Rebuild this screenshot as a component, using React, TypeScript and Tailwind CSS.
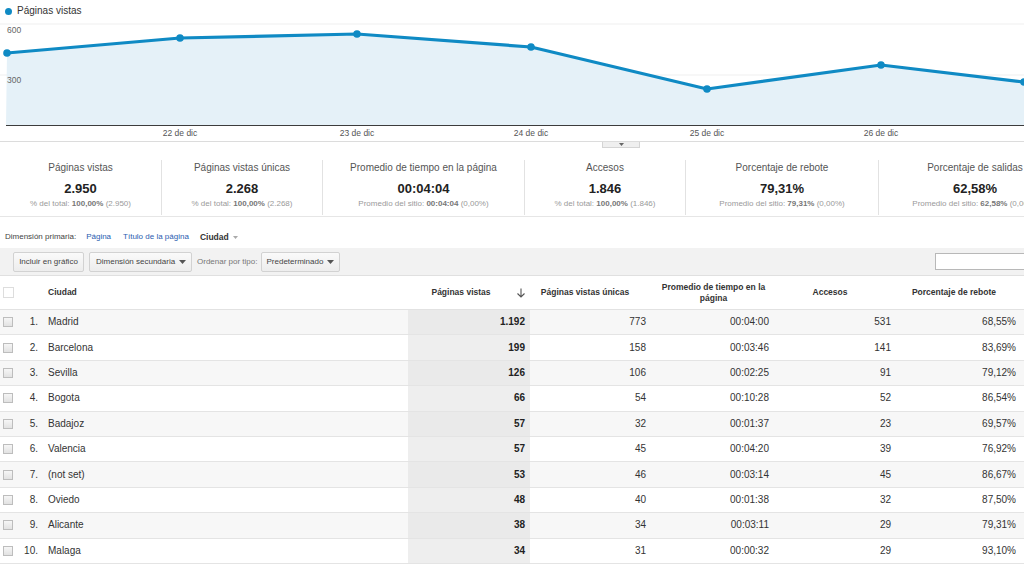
import React from "react";

const rows = [
  ["Madrid", "1.192", "773", "00:04:00", "531", "68,55%"],
  ["Barcelona", "199", "158", "00:03:46", "141", "83,69%"],
  ["Sevilla", "126", "106", "00:02:25", "91", "79,12%"],
  ["Bogota", "66", "54", "00:10:28", "52", "86,54%"],
  ["Badajoz", "57", "32", "00:01:37", "23", "69,57%"],
  ["Valencia", "57", "45", "00:04:20", "39", "76,92%"],
  ["(not set)", "53", "46", "00:03:14", "45", "86,67%"],
  ["Oviedo", "48", "40", "00:01:38", "32", "87,50%"],
  ["Alicante", "38", "34", "00:03:11", "29", "79,31%"],
  ["Malaga", "34", "31", "00:00:32", "29", "93,10%"],
];

const metrics = [
  { w: "w-[161px]", title: "Páginas vistas", value: "2.950", pre: "% del total: ", bold: "100,00%", post: " (2.950)" },
  { w: "w-[161px]", title: "Páginas vistas únicas", value: "2.268", pre: "% del total: ", bold: "100,00%", post: " (2.268)" },
  { w: "w-[202px]", title: "Promedio de tiempo en la página", value: "00:04:04", pre: "Promedio del sitio: ", bold: "00:04:04", post: " (0,00%)" },
  { w: "w-[161px]", title: "Accesos", value: "1.846", pre: "% del total: ", bold: "100,00%", post: " (1.846)" },
  { w: "w-[193px]", title: "Porcentaje de rebote", value: "79,31%", pre: "Promedio del sitio: ", bold: "79,31%", post: " (0,00%)" },
  { w: "w-[193px]", title: "Porcentaje de salidas", value: "62,58%", pre: "Promedio del sitio: ", bold: "62,58%", post: " (0,00%)" },
];

const points: [number, number][] = [
  [7, 31],
  [180, 16],
  [357, 12],
  [531, 25],
  [707, 67],
  [881, 43],
  [1024, 60],
];

const xLabels: [number, string][] = [
  [180, "22 de dic"],
  [357, "23 de dic"],
  [531, "24 de dic"],
  [707, "25 de dic"],
  [881, "26 de dic"],
];

function Caret() {
  return (
    <svg width="7" height="4" viewBox="0 0 7 4" className="block shrink-0">
      <path d="M0 0 L7 0 L3.5 4 Z" fill="#555" />
    </svg>
  );
}

function Chart() {
  const line = points.map((p) => p.join(",")).join(" ");
  const area = `6,103 ${line} 1024,103`;
  return (
    <svg width="1024" height="119" className="block">
      <line x1="0" y1="2" x2="1024" y2="2" stroke="#efefef" strokeWidth="1" />
      <line x1="0" y1="53" x2="1024" y2="53" stroke="#efefef" strokeWidth="1" />
      <polygon points={area} fill="#e5f1f8" />
      <polyline points={line} fill="none" stroke="#0f8ac4" strokeWidth="3.2" strokeLinejoin="round" />
      {points.map(([x, y]) => (
        <circle key={x} cx={x} cy={y} r="3.8" fill="#0f8ac4" />
      ))}
      <line x1="6" y1="103.5" x2="1024" y2="103.5" stroke="#3c3c3c" strokeWidth="1.2" />
      <text x="7" y="11" fontSize="8.5" fill="#666" fontFamily="Liberation Sans, Arial, sans-serif">600</text>
      <text x="7" y="61" fontSize="8.5" fill="#666" fontFamily="Liberation Sans, Arial, sans-serif">300</text>
      {xLabels.map(([x, t]) => (
        <text key={t} x={x} y="114" fontSize="8.5" fill="#555" textAnchor="middle" fontFamily="Liberation Sans, Arial, sans-serif">
          {t}
        </text>
      ))}
    </svg>
  );
}

function RowCheck() {
  return <div className="w-[10px] h-[10px] border border-[#bdbdbd] bg-gradient-to-b from-[#f6f6f6] to-[#e2e2e2]" />;
}

export default function App() {
  return (
    <div className="w-[1024px] h-[568px] overflow-hidden bg-white text-[#333] font-['Liberation_Sans',Arial,sans-serif]">
      {/* legend */}
      <div className="h-[22px] flex items-center pl-[5px] gap-[5px]">
        <div className="w-[7px] h-[7px] rounded-full bg-[#0f8ac4]" />
        <span className="text-[10px] leading-none text-[#333]">Páginas vistas</span>
      </div>

      <Chart />

      {/* collapse handle */}
      <div className="h-[6px] border-t border-[#dcdcdc] flex pl-[602px]">
        <div className="w-[38px] h-[6px] bg-[#efefef] border border-t-0 border-[#d4d4d4] flex items-center justify-center">
          <svg width="5" height="3" viewBox="0 0 5 3" className="block">
            <path d="M0 0 L5 0 L2.5 3 Z" fill="#666" />
          </svg>
        </div>
      </div>

      {/* scorecards */}
      <div className="h-[70px] pt-[13px] flex overflow-hidden border-b border-[#e6e6e6]">
        {metrics.map((m, i) => (
          <div
            key={m.title}
            className={`${m.w} shrink-0 h-[55px] pt-[2px] flex flex-col items-center ${i > 0 ? "border-l border-[#e2e2e2]" : ""}`}
          >
            <div className="text-[10px] leading-[12px] text-[#555] whitespace-nowrap">{m.title}</div>
            <div className="mt-[7px] text-[13px] leading-[16px] font-bold text-[#222] whitespace-nowrap">{m.value}</div>
            <div className="mt-[2px] text-[8px] leading-[10px] text-[#9a9a9a] whitespace-nowrap">
              {m.pre}
              <span className="font-bold text-[#777]">{m.bold}</span>
              {m.post}
            </div>
          </div>
        ))}
      </div>

      {/* primary dimension */}
      <div className="h-[31px] flex items-end pb-[6px] pl-[5px] text-[8px] leading-[10px] whitespace-nowrap">
        <span className="text-[#444]">Dimensión primaria:</span>
        <span className="ml-[10px] text-[#2a5db0]">Página</span>
        <span className="ml-[12px] text-[#2a5db0]">Título de la página</span>
        <span className="ml-[11px] font-bold text-[#333] text-[8.5px]">Ciudad</span>
        <span className="ml-[4px] mb-[3px]">
          <svg width="5" height="3" viewBox="0 0 5 3" className="block">
            <path d="M0 0 L5 0 L2.5 3 Z" fill="#aaa" />
          </svg>
        </span>
      </div>

      {/* toolbar */}
      <div className="h-[28px] bg-[#f2f2f2] border-b border-[#e0e0e0] flex items-center pl-[13px] text-[8px] text-[#444] whitespace-nowrap">
        <div className="h-[20px] w-[71px] flex items-center justify-center border border-[#d2d2d2] rounded-[2px] bg-gradient-to-b from-[#fafafa] to-[#ededed]">
          Incluir en gráfico
        </div>
        <div className="ml-[5px] h-[20px] w-[103px] pl-[6px] pr-[5px] flex items-center justify-between border border-[#d2d2d2] rounded-[2px] bg-gradient-to-b from-[#fafafa] to-[#ededed]">
          <span>Dimensión secundaria</span>
          <Caret />
        </div>
        <span className="ml-[5px] text-[#777]">Ordenar por tipo:</span>
        <div className="ml-[4px] h-[20px] w-[79px] pl-[4px] pr-[5px] flex items-center justify-between border border-[#d2d2d2] rounded-[2px] bg-gradient-to-b from-[#fafafa] to-[#ededed]">
          <span>Predeterminado</span>
          <Caret />
        </div>
        <div className="ml-auto w-[92px] h-[17px] -mr-[3px] bg-white border border-[#b8b8b8]" />
      </div>

      {/* table header */}
      <div className="grid grid-cols-[20px_20px_368px_122px_122px_123px_122px_127px] h-[34px] border-b border-[#e2e2e2] text-[8.5px] leading-[11px] font-bold text-[#333]">
        <div className="flex items-center pl-[3px]">
          <div className="w-[11px] h-[11px] border border-[#dddddd] bg-white" />
        </div>
        <div />
        <div className="flex items-center pl-[8px]">Ciudad</div>
        <div className="flex items-center">
          <span className="flex-1 text-center">Páginas vistas</span>
          <svg width="14" height="10" viewBox="0 0 14 10" className="block mr-[2px]">
            <path d="M7 0.5 V9 M3.5 5.5 L7 9 L10.5 5.5" fill="none" stroke="#555" strokeWidth="1.1" />
          </svg>
        </div>
        <div className="flex items-center justify-center pr-[12px]">Páginas vistas únicas</div>
        <div className="flex items-center justify-center text-center px-[4px]">
          Promedio de tiempo en la
          <br />
          página
        </div>
        <div className="flex items-center justify-center pr-[12px]">Accesos</div>
        <div className="flex items-center justify-center pr-[13px]">Porcentaje de rebote</div>
      </div>

      {/* table rows */}
      {rows.map((r, i) => {
        const odd = i % 2 === 0;
        return (
          <div
            key={r[0]}
            className={`grid grid-cols-[20px_20px_368px_122px_122px_123px_122px_127px] h-[25.4px] border-b border-[#e4e4e4] text-[10px] leading-none text-[#333] ${odd ? "bg-[#f7f7f7]" : "bg-white"}`}
          >
            <div className="flex items-center pl-[3px]">
              <RowCheck />
            </div>
            <div className="flex items-center justify-end pr-[2px]">{i + 1}.</div>
            <div className="flex items-center pl-[8px]">{r[0]}</div>
            <div className={`flex items-center justify-end pr-[5px] font-bold text-[#222] ${odd ? "bg-[#eaeaea]" : "bg-[#eeeeee]"}`}>{r[1]}</div>
            <div className="flex items-center justify-end pr-[6px]">{r[2]}</div>
            <div className="flex items-center justify-end pr-[6px]">{r[3]}</div>
            <div className="flex items-center justify-end pr-[6px]">{r[4]}</div>
            <div className="flex items-center justify-end pr-[8px]">{r[5]}</div>
          </div>
        );
      })}
    </div>
  );
}
